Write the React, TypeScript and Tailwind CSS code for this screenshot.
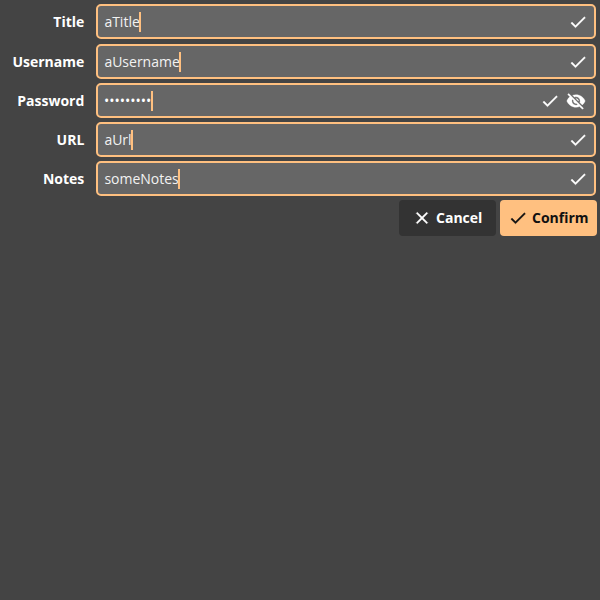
import React from "react";

const CHECK = "M9 16.17 4.83 12l-1.42 1.41L9 19 21 7l-1.41-1.41z";
const CLOSE =
  "M19 6.41 17.59 5 12 10.59 6.41 5 5 6.41 10.59 12 5 17.59 6.41 19 12 13.41 17.59 19 19 17.59 13.41 12z";
const EYE_OFF =
  "M12 7c2.76 0 5 2.24 5 5 0 .65-.13 1.26-.36 1.83l2.92 2.92c1.51-1.26 2.7-2.89 3.43-4.75-1.73-4.39-6-7.5-11-7.5-1.4 0-2.74.25-3.98.7l2.16 2.16C10.74 7.13 11.35 7 12 7zM2 4.27l2.28 2.28.46.46C3.08 8.3 1.78 10.02 1 12c1.73 4.39 6 7.5 11 7.5 1.55 0 3.03-.3 4.38-.84l.42.42L19.73 22 21 20.73 3.27 3 2 4.27zM7.53 9.8l1.55 1.55c-.05.21-.08.43-.08.65 0 1.66 1.34 3 3 3 .22 0 .44-.03.65-.08l1.55 1.55c-.67.33-1.41.53-2.2.53-2.76 0-5-2.24-5-5 0-.79.2-1.53.53-2.2zm4.31-.78 3.15 3.15.02-.16c0-1.66-1.34-3-3-3l-.17.01z";

function Icon({ path, className = "" }: { path: string; className?: string }) {
  return (
    <svg viewBox="0 0 24 24" className={`size-5 shrink-0 fill-current stroke-current stroke-[0.4] ${className}`}>
      <path d={path} />
    </svg>
  );
}

type FieldProps = {
  label: string;
  value: string;
  secret?: boolean;
  className?: string;
};

function Field({ label, value, secret = false, className = "" }: FieldProps) {
  return (
    <div className={`flex h-[35px] items-center ${className}`}>
      <label className="w-[84.3px] shrink-0 text-right text-sm font-bold">{label}</label>
      <div className="ml-[11.7px] flex h-full w-[500px] items-center rounded-[5px] border-2 border-[#ffc080] bg-[#666] pl-[6.4px]">
        {secret ? (
          <span className="-ml-[0.4px] text-sm">{"•".repeat(value.length)}</span>
        ) : (
          <span className="-mr-[0.4px] text-sm text-[#f2f2f2]">{value}</span>
        )}
        <span className="h-5 w-0.5 bg-[#ffc080]" />
        <Icon path={CHECK} className="ml-auto mr-1.5" />
        {secret && <Icon path={EYE_OFF} className="mr-2" />}
      </div>
    </div>
  );
}

export default function App() {
  return (
    <main className="flex h-[600px] w-[600px] flex-col gap-1 bg-[#444] pt-1 font-['Open_Sans',sans-serif] text-white">
      <Field label="Title" value="aTitle" className="mb-px" />
      <Field label="Username" value="aUsername" />
      <Field label="Password" value="aPassword" secret />
      <Field label="URL" value="aUrl" />
      <Field label="Notes" value="someNotes" />
      <div className="flex justify-end gap-1 pr-[3px] text-sm font-bold">
        <button className="flex h-9 w-[97px] items-center gap-1 rounded bg-[#333] pl-[13px]">
          <Icon path={CLOSE} />
          Cancel
        </button>
        <button className="flex h-9 w-[97px] items-center gap-1 rounded bg-[#ffc080] pl-2 text-[#111]">
          <Icon path={CHECK} />
          Confirm
        </button>
      </div>
    </main>
  );
}
